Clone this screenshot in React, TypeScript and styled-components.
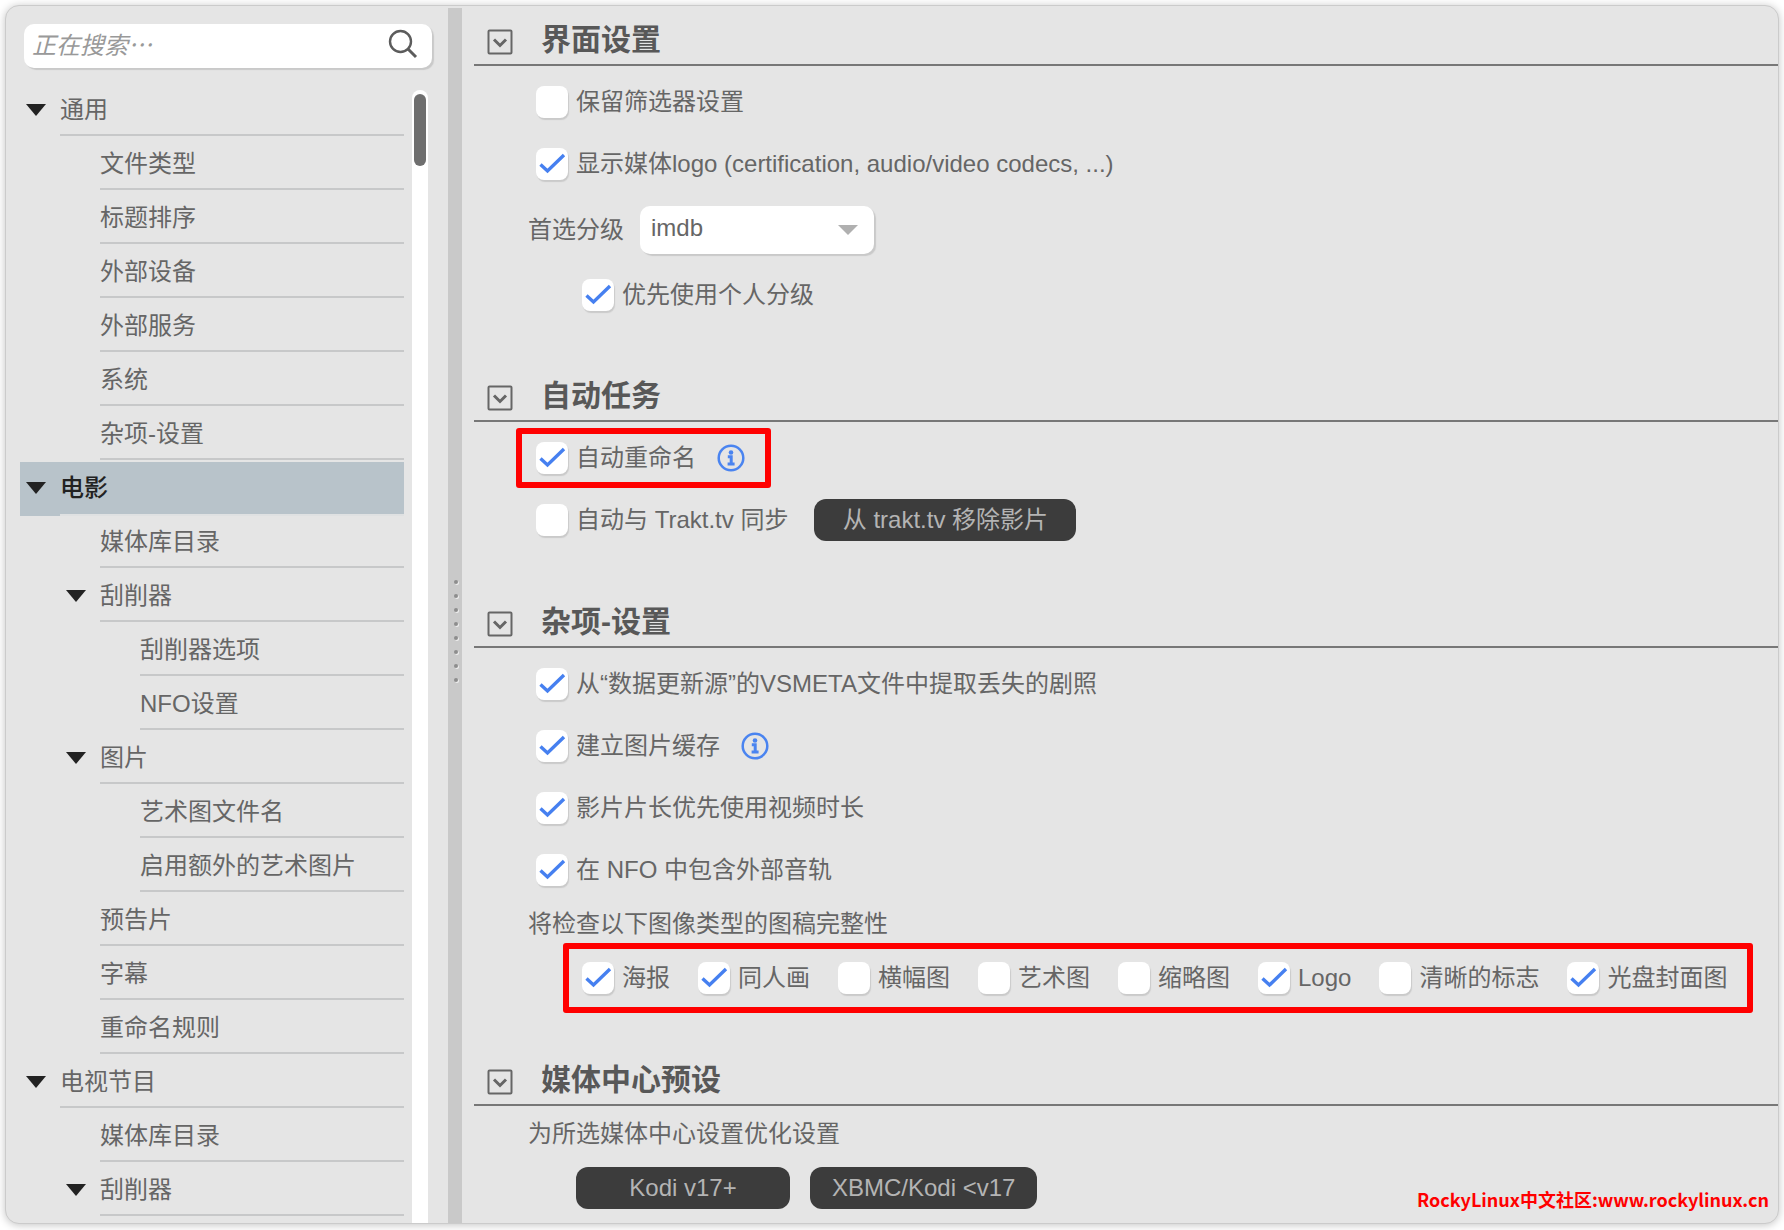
import React, { useId, useState } from "react";
import styled, { createGlobalStyle, css } from "styled-components";

const GlobalStyle = createGlobalStyle`
  * { box-sizing: border-box; }
  body {
    margin: 0;
    background: #fff;
    color: #666;
    font-family: "Liberation Sans", "Noto Sans CJK SC", sans-serif;
    font-size: 24px;
    line-height: 32px;
  }
  button, input, select { font: inherit; color: inherit; }
`;

const Window = styled.div`
  position: relative;
  display: flex;
  min-height: calc(100vh - 11px);
  margin: 5px 5px 6px;
  border: 1px solid #cbcbcb;
  border-radius: 14px;
  background: #e5e5e5;
  box-shadow: 0 1px 8px rgba(0, 0, 0, 0.24);
  overflow: hidden;
`;

const Sidebar = styled.aside`
  flex: 0 0 442px;
  display: flex;
  flex-direction: column;
  padding: 18px 16px 0 14px;
`;

const SearchBox = styled.label`
  display: flex;
  align-items: center;
  height: 44px;
  margin-left: 4px;
  padding: 0 14px 4px 8px;
  border-radius: 10px;
  background: #fff;
  box-shadow: 2px 2px 1px #c9c9c9;
`;

const SearchInput = styled.input`
  flex: 1;
  min-width: 0;
  padding: 4px 0 0;
  border: 0;
  outline: 0;
  background: transparent;
  &::placeholder {
    color: #999;
    font-style: italic;
    opacity: 1;
  }
`;

const TreeArea = styled.div`
  flex: 1;
  display: flex;
  justify-content: space-between;
  padding: 16px 4px 0 0;
`;

const Tree = styled.ul`
  flex: 1;
  margin: 0;
  padding: 0;
  list-style: none;
`;

const ScrollTrack = styled.div`
  width: 16px;
  margin: 6px 0 0 8px;
  padding: 4px 2px;
  border-radius: 8px 8px 0 0;
  background: #fff;
`;

const ScrollThumb = styled.div`
  height: 72px;
  border-radius: 6px;
  background: #6e6e6e;
`;

const TreeRow = styled.button<{ $depth: number; $selected: boolean }>`
  display: flex;
  align-items: flex-start;
  width: 100%;
  height: 54px;
  padding: 0 0 0 ${(p) => p.$depth * 40 + 6}px;
  border: 0;
  background: ${(p) => (p.$selected ? "#b8c3ca" : "transparent")};
  color: ${(p) => (p.$selected ? "#222" : "inherit")};
  font-weight: ${(p) => (p.$selected ? 500 : 400)};
  text-align: left;
`;

const ArrowSlot = styled.span`
  display: flex;
  align-items: center;
  width: 34px;
  height: 52px;
`;

const TreeLabel = styled.span<{ $selected: boolean }>`
  flex: 1;
  height: ${(p) => (p.$selected ? 54 : 52)}px;
  border-bottom: 2px solid ${(p) => (p.$selected ? "#dfe1e2" : "#c7c8c9")};
  line-height: 52px;
`;

const Splitter = styled.div`
  flex: 0 0 14px;
  display: flex;
  flex-direction: column;
  align-items: center;
  justify-content: center;
  gap: 10px;
  margin-top: 2px;
  padding: 30px 0 0 2px;
  background: #c9c9c9;
`;

const GripDot = styled.span`
  width: 4px;
  height: 4px;
  border-radius: 2px;
  background: #8d8d8d;
  box-shadow: 1px 1px 0 #eee;
`;

const Content = styled.main`
  flex: 1;
  min-width: 0;
  display: flex;
  flex-direction: column;
  gap: 37px;
  padding-left: 12px;
`;

const SectionHeader = styled.header`
  display: flex;
  align-items: center;
  height: 60px;
  padding: 14px 0 0 13px;
  border-bottom: 2px solid #777;
`;

const CollapseButton = styled.button`
  display: flex;
  padding: 0;
  border: 0;
  background: transparent;
`;

const SectionTitle = styled.h2`
  margin: 0 0 4px 28px;
  color: #585858;
  font-size: 30px;
  line-height: 40px;
  font-weight: 700;
`;

const SectionBody = styled.div`
  padding: 5px 0 0 54px;
`;

const Row = styled.div<{ $indent?: number; $height?: number; $gap?: number }>`
  display: flex;
  align-items: center;
  gap: ${(p) => p.$gap ?? 0}px;
  height: ${(p) => p.$height ?? 62}px;
  padding-left: ${(p) => p.$indent ?? 8}px;
`;

const Highlight = styled.div<{ $block?: boolean }>`
  position: relative;
  display: flex;
  align-items: center;
  gap: ${(p) => (p.$block ? 28 : 21)}px;
  &::after {
    content: "";
    position: absolute;
    border: 6px solid #f00;
    border-radius: 3px;
    pointer-events: none;
    ${(p) =>
      p.$block
        ? css`
            inset: -19px -26px -19px -19px;
          `
        : css`
            inset: -14px -26px -14px -20px;
          `}
  }
`;

const CheckLabel = styled.label`
  display: flex;
  align-items: center;
  gap: 8px;
  white-space: nowrap;
`;

const CheckFrame = styled.span`
  display: grid;
  width: 32px;
  height: 32px;
  & > * { grid-area: 1 / 1; }
  & > svg { pointer-events: none; visibility: hidden; }
  & > input:checked + svg { visibility: visible; }
`;

const CheckInput = styled.input`
  appearance: none;
  width: 32px;
  height: 32px;
  margin: 0;
  border-radius: 8px;
  background: #fff;
  box-shadow: 1px 2px 1px #cacaca;
`;

const Combo = styled.div`
  display: grid;
  align-items: center;
  width: 234px;
  margin-left: 16px;
  & > * { grid-area: 1 / 1; }
  & > svg { justify-self: end; margin-right: 16px; pointer-events: none; }
`;

const ComboSelect = styled.select`
  appearance: none;
  width: 100%;
  height: 48px;
  padding: 0 44px 4px 11px;
  border: 0;
  border-radius: 10px;
  background: #fff;
  box-shadow: 2px 2px 1px #c9c9c9;
`;

const DarkButton = styled.button<{ $minWidth: number }>`
  min-width: ${(p) => p.$minWidth}px;
  height: 42px;
  padding: 0 22px;
  border: 0;
  border-radius: 12px;
  background: #3c3c3c;
  color: #b4b4b4;
`;

const Watermark = styled.a`
  position: absolute;
  right: 9px;
  bottom: 10px;
  color: #f00;
  font-family: "Noto Sans CJK SC", sans-serif;
  font-size: 18px;
  line-height: 28px;
  font-weight: 700;
  text-decoration: none;
`;

const SearchIcon = () => (
  <svg width="30" height="30" viewBox="0 0 30 30" fill="none" stroke="#5c5c5c" aria-hidden="true">
    <circle cx="12.5" cy="12.5" r="10.5" strokeWidth="2.4" />
    <path d="M20 20 28 28" strokeWidth="3" />
  </svg>
);

const TreeArrow = () => (
  <svg width="20" height="12" viewBox="0 0 20 12" fill="#222" aria-hidden="true">
    <path d="M0 0h20L10 12z" />
  </svg>
);

const CollapseIcon = () => (
  <svg width="26" height="26" viewBox="0 0 26 26" fill="none" stroke="#666" strokeWidth="2" aria-hidden="true">
    <rect x="1.5" y="1.5" width="23" height="23" rx="1" />
    <path d="m7 10.5 6 6 6-6" strokeWidth="3" />
  </svg>
);

const InfoIcon = () => (
  <svg width="28" height="28" viewBox="0 0 28 28" fill="none" stroke="#4a84f0" aria-hidden="true">
    <circle cx="14" cy="14" r="12.3" strokeWidth="2.5" />
    <circle cx="14" cy="8.5" r="2.3" fill="#4a84f0" stroke="none" />
    <path d="M10.8 12.8h3.4v7M10.6 20h7" strokeWidth="3" />
  </svg>
);

const CheckMark = () => (
  <svg width="32" height="32" viewBox="0 0 32 32" fill="none" stroke="#4680f0" strokeWidth="3.4" aria-hidden="true">
    <path d="m4.5 16.5 7 6.5L28 7" />
  </svg>
);

function Check({ label, checked = false }: { label: string; checked?: boolean }) {
  const id = useId();
  return (
    <CheckLabel htmlFor={id}>
      <CheckFrame>
        <CheckInput id={id} type="checkbox" defaultChecked={checked} />
        <CheckMark />
      </CheckFrame>
      {label}
    </CheckLabel>
  );
}

function Section({ title, children }: { title: string; children: React.ReactNode }) {
  const [open, setOpen] = useState(true);
  return (
    <section>
      <SectionHeader>
        <CollapseButton type="button" aria-label={title} aria-expanded={open} onClick={() => setOpen(!open)}>
          <CollapseIcon />
        </CollapseButton>
        <SectionTitle>{title}</SectionTitle>
      </SectionHeader>
      {open && <SectionBody>{children}</SectionBody>}
    </section>
  );
}

type Item = { label: string; depth: number; group?: boolean };

const items: Item[] = [
  { label: "通用", depth: 0, group: true },
  { label: "文件类型", depth: 1 },
  { label: "标题排序", depth: 1 },
  { label: "外部设备", depth: 1 },
  { label: "外部服务", depth: 1 },
  { label: "系统", depth: 1 },
  { label: "杂项-设置", depth: 1 },
  { label: "电影", depth: 0, group: true },
  { label: "媒体库目录", depth: 1 },
  { label: "刮削器", depth: 1, group: true },
  { label: "刮削器选项", depth: 2 },
  { label: "NFO设置", depth: 2 },
  { label: "图片", depth: 1, group: true },
  { label: "艺术图文件名", depth: 2 },
  { label: "启用额外的艺术图片", depth: 2 },
  { label: "预告片", depth: 1 },
  { label: "字幕", depth: 1 },
  { label: "重命名规则", depth: 1 },
  { label: "电视节目", depth: 0, group: true },
  { label: "媒体库目录", depth: 1 },
  { label: "刮削器", depth: 1, group: true },
];

const artwork: [string, boolean][] = [
  ["海报", true],
  ["同人画", true],
  ["横幅图", false],
  ["艺术图", false],
  ["缩略图", false],
  ["Logo", true],
  ["清晰的标志", false],
  ["光盘封面图", true],
];

export default function App() {
  const [selected, setSelected] = useState(7);
  return (
    <>
      <GlobalStyle />
      <Window>
        <Sidebar>
          <SearchBox>
            <SearchInput type="text" placeholder="正在搜索⋯" aria-label="搜索" />
            <SearchIcon />
          </SearchBox>
          <TreeArea>
            <Tree>
              {items.map((item, i) => (
                <li key={i}>
                  <TreeRow
                    type="button"
                    $depth={item.depth}
                    $selected={i === selected}
                    onClick={() => setSelected(i)}
                  >
                    <ArrowSlot>{item.group && <TreeArrow />}</ArrowSlot>
                    <TreeLabel $selected={i === selected}>{item.label}</TreeLabel>
                  </TreeRow>
                </li>
              ))}
            </Tree>
            <ScrollTrack>
              <ScrollThumb />
            </ScrollTrack>
          </TreeArea>
        </Sidebar>

        <Splitter>
          {Array.from({ length: 8 }, (_, i) => (
            <GripDot key={i} />
          ))}
        </Splitter>

        <Content>
          <Section title="界面设置">
            <Row>
              <Check label="保留筛选器设置" />
            </Row>
            <Row>
              <Check label="显示媒体logo (certification, audio/video codecs, ...)" checked />
            </Row>
            <Row $indent={0} $height={70}>
              <label htmlFor="rating">首选分级</label>
              <Combo>
                <ComboSelect id="rating" defaultValue="imdb">
                  <option value="imdb">imdb</option>
                </ComboSelect>
                <svg width="20" height="10" viewBox="0 0 20 10" fill="#b0b0b0" aria-hidden="true">
                  <path d="M0 0h20L10 10z" />
                </svg>
              </Combo>
            </Row>
            <Row $indent={54} $height={60}>
              <Check label="优先使用个人分级" checked />
            </Row>
          </Section>

          <Section title="自动任务">
            <Row>
              <Highlight>
                <Check label="自动重命名" checked />
                <InfoIcon />
              </Highlight>
            </Row>
            <Row $gap={26}>
              <Check label="自动与 Trakt.tv 同步" />
              <DarkButton type="button" $minWidth={262}>
                从 trakt.tv 移除影片
              </DarkButton>
            </Row>
          </Section>

          <Section title="杂项-设置">
            <Row>
              <Check label="从“数据更新源”的VSMETA文件中提取丢失的剧照" checked />
            </Row>
            <Row $gap={21}>
              <Check label="建立图片缓存" checked />
              <InfoIcon />
            </Row>
            <Row>
              <Check label="影片片长优先使用视频时长" checked />
            </Row>
            <Row>
              <Check label="在 NFO 中包含外部音轨" checked />
            </Row>
            <Row $indent={0} $height={46}>
              将检查以下图像类型的图稿完整性
            </Row>
            <Row $indent={54}>
              <Highlight $block>
                {artwork.map(([label, checked]) => (
                  <Check key={label} label={label} checked={checked} />
                ))}
              </Highlight>
            </Row>
          </Section>

          <Section title="媒体中心预设">
            <Row $indent={0} $height={46}>
              为所选媒体中心设置优化设置
            </Row>
            <Row $indent={48} $gap={20}>
              <DarkButton type="button" $minWidth={214}>
                Kodi v17+
              </DarkButton>
              <DarkButton type="button" $minWidth={214}>
                XBMC/Kodi &lt;v17
              </DarkButton>
            </Row>
          </Section>
        </Content>

        <Watermark href="https://www.rockylinux.cn">RockyLinux中文社区:www.rockylinux.cn</Watermark>
      </Window>
    </>
  );
}
